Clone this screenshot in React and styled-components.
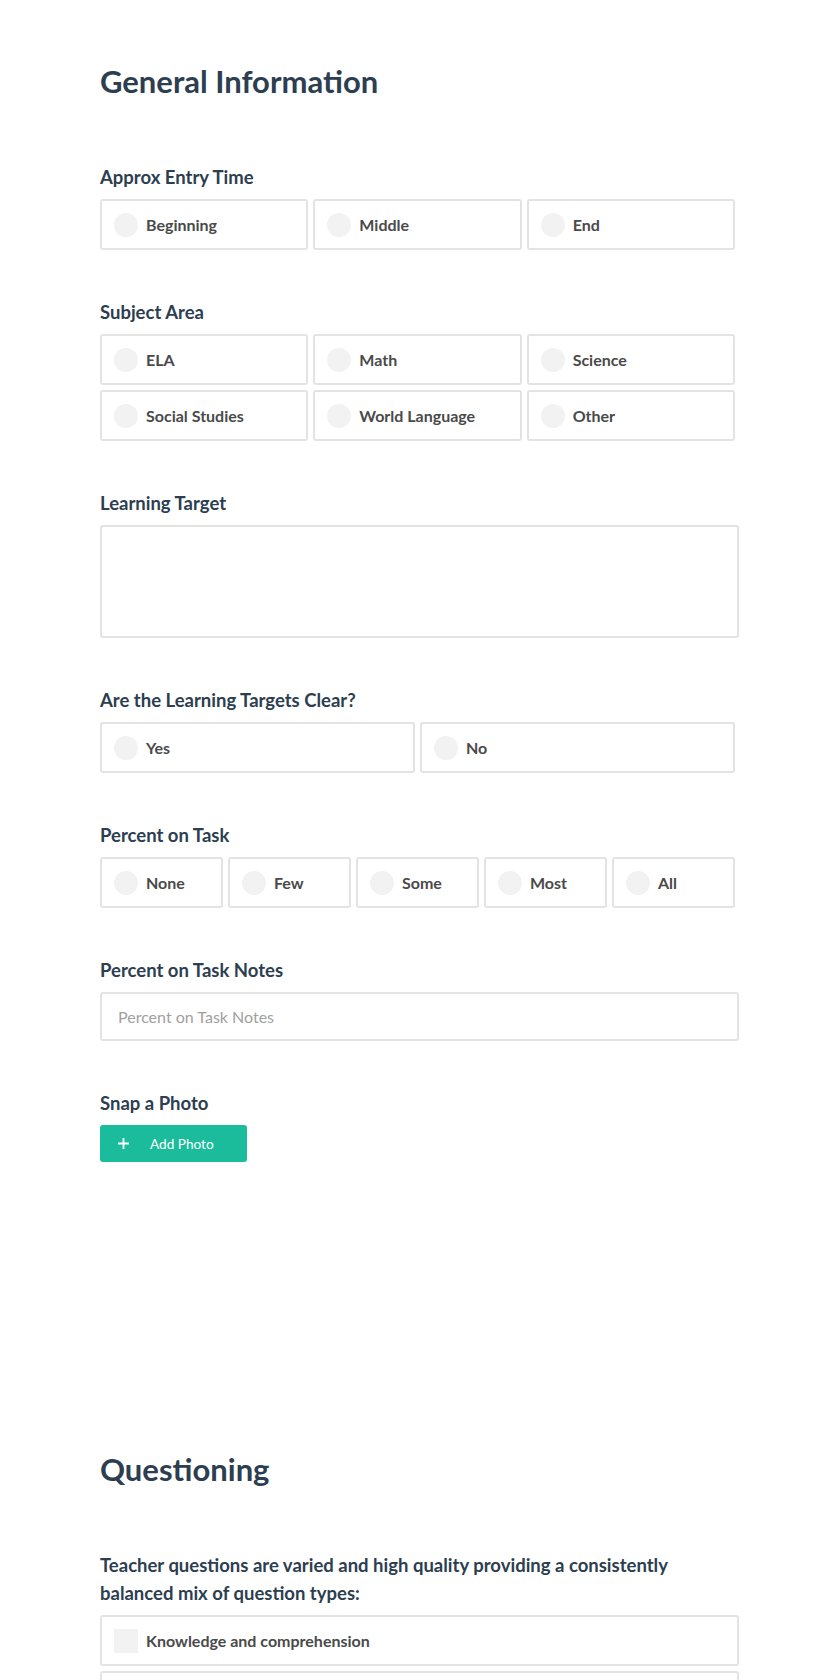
import React from 'react';
import styled, { createGlobalStyle } from 'styled-components';

const GlobalStyle = createGlobalStyle`
	body {
		margin: 0;
		background: #fff;
		font-family: Lato, 'Open Sans', sans-serif;
		color: #2c3e50;
	}
	* {
		box-sizing: border-box;
	}
`;

const PAGE = styled.div`
	padding: 64px 0 0 100px;
	width: 740px;
`;

const SECTION = styled.section`
	display: flex;
	flex-direction: column;
	margin-bottom: ${props => props.bottom || 0}px;
`;

const TITLE = styled.h1`
	margin: 0 0 65px;
	font-size: 31px;
	line-height: 34px;
	font-weight: 700;
	color: #2c3e50;
`;

const FIELD = styled.div`
	display: flex;
	flex-direction: column;
	margin-bottom: 48px;
	&:last-child {
		margin-bottom: 0;
	}
`;

const LABEL = styled.label`
	display: block;
	margin-bottom: 8px;
	font-size: 18.5px;
	line-height: 28px;
	font-weight: 700;
	color: #2c3e50;
`;

const OPTIONS = styled.div`
	display: grid;
	grid-template-columns: repeat(${props => props.cols}, 1fr);
	gap: 5px;
	width: 635px;
`;

const OPTION = styled.div`
	display: flex;
	align-items: center;
	height: 51px;
	padding: 0 12px;
	border: 2px solid #e3e3e3;
	border-radius: 3px;
	background: #fff;
	font-size: 16px;
	font-weight: 700;
	color: #4a4a4a;
	cursor: pointer;
`;

const MARK = styled.span`
	flex: none;
	width: 24px;
	height: 24px;
	margin-right: 8px;
	border-radius: ${props => (props.square ? '0' : '50%')};
	background: #f2f2f2;
`;

const CHECKS = styled.div`
	display: flex;
	flex-direction: column;
	gap: 5px;
	width: 639px;
`;

const TEXTAREA = styled.textarea`
	display: block;
	width: 639px;
	height: 113px;
	border: 2px solid #e3e3e3;
	border-radius: 3px;
	resize: none;
	outline: none;
	font-family: inherit;
	font-size: 16px;
`;

const INPUT = styled.input`
	display: block;
	width: 639px;
	height: 49px;
	padding: 0 16px;
	border: 2px solid #e3e3e3;
	border-radius: 3px;
	outline: none;
	font-family: inherit;
	font-size: 16px;
	color: #4a4a4a;
	&::placeholder {
		color: #a0a0a0;
	}
`;

const BUTTON = styled.button`
	display: flex;
	align-items: center;
	width: 147px;
	height: 37px;
	padding: 0 0 0 18px;
	border: none;
	border-radius: 3px;
	background: #1abc9c;
	color: #fff;
	font-family: inherit;
	font-size: 13.6px;
	cursor: pointer;
	svg {
		margin-right: 21px;
	}
`;

const Radios = ({ cols, items }) => (
	<OPTIONS cols={cols}>
		{items.map(item => (
			<OPTION key={item}>
				<MARK />
				{item}
			</OPTION>
		))}
	</OPTIONS>
);

const App = () => {
	return (
		<PAGE>
			<GlobalStyle />
			<SECTION bottom={290}>
				<TITLE>General Information</TITLE>
				<FIELD>
					<LABEL>Approx Entry Time</LABEL>
					<Radios cols={3} items={['Beginning', 'Middle', 'End']} />
				</FIELD>
				<FIELD>
					<LABEL>Subject Area</LABEL>
					<Radios cols={3} items={['ELA', 'Math', 'Science', 'Social Studies', 'World Language', 'Other']} />
				</FIELD>
				<FIELD>
					<LABEL>Learning Target</LABEL>
					<TEXTAREA />
				</FIELD>
				<FIELD>
					<LABEL>Are the Learning Targets Clear?</LABEL>
					<Radios cols={2} items={['Yes', 'No']} />
				</FIELD>
				<FIELD>
					<LABEL>Percent on Task</LABEL>
					<Radios cols={5} items={['None', 'Few', 'Some', 'Most', 'All']} />
				</FIELD>
				<FIELD>
					<LABEL>Percent on Task Notes</LABEL>
					<INPUT placeholder="Percent on Task Notes" />
				</FIELD>
				<FIELD>
					<LABEL>Snap a Photo</LABEL>
					<BUTTON>
						<svg width="11" height="11" viewBox="0 0 11 11">
							<path d="M5.5 0v11M0 5.5h11" stroke="#fff" strokeWidth="1.8" />
						</svg>
						Add Photo
					</BUTTON>
				</FIELD>
			</SECTION>
			<SECTION>
				<TITLE>Questioning</TITLE>
				<FIELD>
					<LABEL>
						Teacher questions are varied and high quality providing a consistently
						<br />
						balanced mix of question types:
					</LABEL>
					<CHECKS>
						{['Knowledge and comprehension', 'Application and analysis', 'Synthesis and evaluation'].map(item => (
							<OPTION key={item}>
								<MARK square />
								{item}
							</OPTION>
						))}
					</CHECKS>
				</FIELD>
			</SECTION>
		</PAGE>
	);
};

export default App;
